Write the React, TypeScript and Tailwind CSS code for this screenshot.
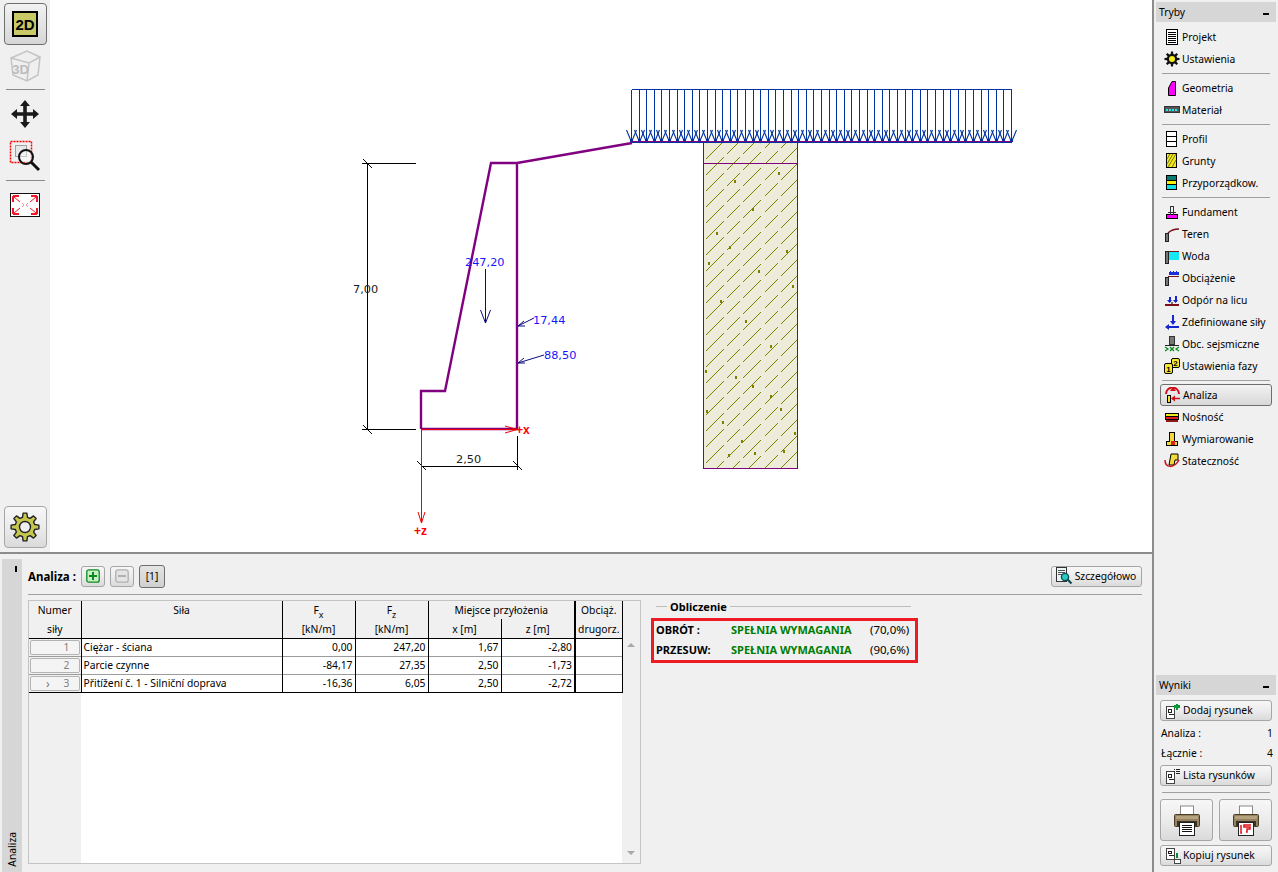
import React from "react";

const FONT = "font-['Noto_Sans','DejaVu_Sans',sans-serif]";
const BTN = "border border-[#a6a6a6] rounded-[3px] bg-linear-to-b from-[#f7f7f7] via-[#ececec] to-[#dadada]";

function Ico({ children, size = 16 }: { children: React.ReactNode; size?: number }) {
  return (
    <svg width={size} height={size} viewBox="0 0 16 16" className="shrink-0" shapeRendering="crispEdges">
      {children}
    </svg>
  );
}

function gearPath(cx: number, cy: number, ro: number, ri: number, teeth: number) {
  let d = "";
  const step = (Math.PI * 2) / teeth;
  for (let i = 0; i < teeth; i++) {
    const a = i * step - Math.PI / 2;
    const pts = [
      [ri, a - step * 0.32],
      [ro, a - step * 0.17],
      [ro, a + step * 0.17],
      [ri, a + step * 0.32],
    ];
    pts.forEach(([r, t], j) => {
      d += `${i === 0 && j === 0 ? "M" : "L"}${(cx + r * Math.cos(t)).toFixed(2)} ${(cy + r * Math.sin(t)).toFixed(2)} `;
    });
  }
  return d + "Z";
}

const Post = () => <rect x="1.500" y="7.500" width="3" height="8" fill="#777" stroke="#222" strokeWidth="1" />;

const icons: Record<string, React.ReactNode> = {
  projekt: (
    <Ico>
      <rect x="2.500" y="0.500" width="11" height="15" fill="#fff" stroke="#000" />
      <path d="M4 3.500h8M4 5.500h8M4 7.500h8M4 9.500h8M4 11.500h8M4 13.500h8" stroke="#000" />
    </Ico>
  ),
  ustawienia: (
    <svg width="16" height="16" viewBox="0 0 16 16">
      <path d={gearPath(8, 8, 7.6, 5.2, 8)} fill="#111" />
      <circle cx="8" cy="8" r="3" fill="#f6ee1c" />
    </svg>
  ),
  geometria: (
    <Ico>
      <path d="M4.500 15.500V8L8 1.500h3.500v14z" fill="#f0f" stroke="#000" shapeRendering="auto" />
    </Ico>
  ),
  material: (
    <Ico>
      <rect x="0.500" y="4.500" width="15" height="6" fill="#555" stroke="#333" />
      <path d="M2 7.500h12" stroke="#1fe6f0" strokeWidth="2" strokeDasharray="2 1" />
    </Ico>
  ),
  profil: (
    <Ico>
      <rect x="2.500" y="0.500" width="10" height="15" fill="#fff" stroke="#000" />
      <path d="M3 5.500h9M3 10.500h9" stroke="#000" />
    </Ico>
  ),
  grunty: (
    <Ico>
      <rect x="2.500" y="0.500" width="10" height="14" fill="#f2e820" stroke="#000" />
      <path d="M3 6l3-5M3 11l6-10M4 14l8-13M8 14l4-7" stroke="#7a7a10" strokeWidth="1" shapeRendering="auto" />
    </Ico>
  ),
  przypisz: (
    <Ico>
      <rect x="2.500" y="0.500" width="10" height="14" fill="#fff" stroke="#000" />
      <rect x="3" y="1" width="9" height="4" fill="#0d7a70" />
      <rect x="3" y="5" width="9" height="5" fill="#f7f000" />
      <rect x="3" y="10" width="9" height="4" fill="#10e0e6" />
      <path d="M3 5.500h9M3 9.500h9" stroke="#000" />
    </Ico>
  ),
  fundament: (
    <Ico>
      <rect x="2.500" y="10.500" width="11" height="4" fill="#f0f" stroke="#000" />
      <path d="M6.500 2v8.500M9.500 2v8.500M6 2.500h4M4 8.500h8" stroke="#333" fill="none" />
    </Ico>
  ),
  teren: (
    <Ico>
      <Post />
      <path d="M4 7C7 4 11 3 15 3" stroke="#7a1018" strokeWidth="1.600" fill="none" shapeRendering="auto" />
    </Ico>
  ),
  woda: (
    <Ico>
      <rect x="4" y="4" width="11" height="8" fill="#15e8f5" />
      <path d="M1 3.500h14" stroke="#7a1018" strokeWidth="1" />
      <rect x="1.500" y="3.500" width="3" height="12" fill="#777" stroke="#222" />
    </Ico>
  ),
  obciazenie: (
    <Ico>
      <Post />
      <path d="M4 6.500h11" stroke="#7a1018" />
      <path d="M5 2h10v3H5z" fill="#1a2fd8" />
      <path d="M6.500 2v-1M9.500 2v-1M12.500 2v-1" stroke="#1a2fd8" />
    </Ico>
  ),
  odpor: (
    <Ico>
      <path d="M1 12.500h14" stroke="#7a1018" strokeWidth="2" />
      <path d="M5.500 5v5M11.500 4v6" stroke="#1525d0" strokeWidth="2" />
      <path d="M3 8l2.500 3L8 8zM9 8l2.500 3L14 8z" fill="#1525d0" shapeRendering="auto" />
      <rect x="7" y="10" width="2" height="2" fill="#777" />
    </Ico>
  ),
  zdef: (
    <Ico>
      <path d="M9 1v9M3 13h12" stroke="#1525d0" strokeWidth="2" />
      <path d="M6 7l3 4 3-4zM5 10l-4 3 4 3z" fill="#1525d0" shapeRendering="auto" />
    </Ico>
  ),
  sejs: (
    <Ico>
      <rect x="5.500" y="0.500" width="5" height="8" fill="#777" stroke="#333" />
      <path d="M1 9.500h14" stroke="#222" />
      <path d="M1 11l3 2-3 2M6 11l2 2 2-2M6 15l2-2 2 2M15 11l-3 2 3 2" stroke="#0a8a20" fill="none" strokeWidth="1.300" shapeRendering="auto" />
    </Ico>
  ),
  faza: (
    <svg width="16" height="16" viewBox="0 0 16 16">
      <rect x="7.500" y="0.500" width="8" height="9" rx="1.500" fill="#f3e733" stroke="#000" />
      <rect x="0.500" y="5.500" width="8" height="10" rx="1.500" fill="#f3e733" stroke="#000" />
      <text x="11.500" y="7.800" textAnchor="middle" fontSize="8" fontWeight="700" fontFamily="Liberation Sans">2</text>
      <text x="4.500" y="13.800" textAnchor="middle" fontSize="8" fontWeight="700" fontFamily="Liberation Sans">1</text>
    </svg>
  ),
  analiza: (
    <svg width="16" height="16" viewBox="0 0 16 16">
      <path d="M1 7A6 6 0 0 1 14 7" stroke="#d0101a" strokeWidth="2" fill="none" />
      <path d="M5 4l3-4 3 4z" fill="#d0101a" />
      <rect x="2.500" y="8.500" width="3" height="7" fill="#f5e12c" stroke="#000" />
      <path d="M7 11.500h8" stroke="#d0101a" strokeWidth="1.500" />
      <path d="M10 8.500l-4 3 4 3z" fill="#d0101a" />
    </svg>
  ),
  nosnosc: (
    <Ico>
      <rect x="1.500" y="4.500" width="13" height="3" fill="#f2e820" stroke="#000" />
      <rect x="1.500" y="7.500" width="13" height="3" fill="#e02020" stroke="#000" />
      <path d="M2 11h12v2H2z" fill="#8a1a1a" />
    </Ico>
  ),
  wymiar: (
    <Ico>
      <path d="M5.500 1.500h5v9h3v4h-11v-4h3z" fill="#f4d93a" stroke="#000" />
      <rect x="7" y="10" width="4" height="4" fill="#e02020" />
    </Ico>
  ),
  statecz: (
    <svg width="16" height="16" viewBox="0 0 16 16">
      <path d="M7 1h7v6h-3l-1 5H5z" fill="#f4d93a" stroke="#000" />
      <path d="M1 7C1 15 10 16 15 7" stroke="#d0101a" strokeWidth="1.500" fill="none" />
    </svg>
  ),
  dodaj: (
    <Ico>
      <rect x="1.500" y="3.500" width="8" height="11.500" fill="#fff" stroke="#444" />
      <path d="M3.500 6.500h3v3h-3zM3.500 11.500h5" stroke="#222" fill="none" />
      <path d="M9 3.500h6M12 0.500v6" stroke="#0a9a30" strokeWidth="2.500" />
    </Ico>
  ),
  lista: (
    <Ico>
      <rect x="1.500" y="3.500" width="8" height="11.500" fill="#fff" stroke="#444" />
      <path d="M3.500 6.500h3v3h-3zM3.500 11.500h5" stroke="#222" fill="none" />
      <path d="M9 1.500h1M11 1.500h4M9 3.500h1M11 3.500h4M9 5.500h1M11 5.500h4" stroke="#222" />
    </Ico>
  ),
  kopiuj: (
    <Ico>
      <rect x="1.500" y="0.500" width="8" height="10.500" fill="#fff" stroke="#444" />
      <path d="M3.500 3.500h3v2h-3zM3.500 7.500h5" stroke="#222" fill="none" />
      <path d="M12 5v5" stroke="#0a8a30" strokeWidth="1.500" />
      <rect x="9.500" y="11.500" width="6" height="4" fill="#fff" stroke="#444" />
    </Ico>
  ),
  szczegoly: (
    <svg width="18" height="18" viewBox="0 0 18 18">
      <rect x="1.500" y="0.500" width="10" height="14" fill="#eaf6f6" stroke="#333" />
      <path d="M3 3.500h7M3 5.500h7M3 7.500h4" stroke="#555" />
      <circle cx="10" cy="10" r="3.600" fill="#28c8c0" stroke="#0a4a50" strokeWidth="1.300" />
      <path d="M12.500 12.500l4 4" stroke="#0a4a50" strokeWidth="2.200" />
    </svg>
  ),
};

function Printer({ red }: { red?: boolean }) {
  return (
    <svg width="26" height="31" viewBox="0 0 26 31">
      <rect x="6.500" y="1" width="13" height="9" fill="#fff" stroke="#888" />
      <rect x="0.500" y="9.500" width="25" height="12" rx="1" fill="#97825f" stroke="#4a3e28" />
      <rect x="2" y="11" width="22" height="3" fill="#b5a27e" />
      <rect x="3" y="16" width="20" height="5" fill="#3a3428" />
      <rect x="5.500" y="17.500" width="15" height="13" fill="#fff" stroke="#222" />
      {red ? (
        <path d="M8 20v8h1M18 20h-7v2h6v2h-3v3h-1" stroke="#e01018" strokeWidth="1.500" fill="none" />
      ) : (
        <path d="M8 20.500h10M8 22.500h10M8 24.500h10M8 26.500h10" stroke="#111" />
      )}
    </svg>
  );
}

type Item = { label: string; icon: string; active?: boolean };
const groups: Item[][] = [
  [
    { label: "Projekt", icon: "projekt" },
    { label: "Ustawienia", icon: "ustawienia" },
  ],
  [
    { label: "Geometria", icon: "geometria" },
    { label: "Materiał", icon: "material" },
  ],
  [
    { label: "Profil", icon: "profil" },
    { label: "Grunty", icon: "grunty" },
    { label: "Przyporządkow.", icon: "przypisz" },
  ],
  [
    { label: "Fundament", icon: "fundament" },
    { label: "Teren", icon: "teren" },
    { label: "Woda", icon: "woda" },
    { label: "Obciążenie", icon: "obciazenie" },
    { label: "Odpór na licu", icon: "odpor" },
    { label: "Zdefiniowane siły", icon: "zdef" },
    { label: "Obc. sejsmiczne", icon: "sejs" },
    { label: "Ustawienia fazy", icon: "faza" },
  ],
  [
    { label: "Analiza", icon: "analiza", active: true },
    { label: "Nośność", icon: "nosnosc" },
    { label: "Wymiarowanie", icon: "wymiar" },
    { label: "Stateczność", icon: "statecz" },
  ],
];

function PanelHeader({ title }: { title: string }) {
  return (
    <div className="h-5 mx-[2px] bg-[#d6d6d6] flex items-center justify-between pl-[3px] pr-[7px]">
      <span>{title}</span>
      <span className="w-[6px] h-[2px] bg-black mt-1" />
    </div>
  );
}

function SideButton({ icon, label }: { icon: string; label: string }) {
  return (
    <button className={`h-[21px] w-[112px] ml-[6px] flex items-center gap-[2px] pl-[4px] ${BTN}`}>
      {icons[icon]}
      <span>{label}</span>
    </button>
  );
}

function Sidebar() {
  return (
    <aside className="w-[126px] shrink-0 h-full border-l-2 border-[#8c8c8c] bg-[#f0f0f0] flex flex-col justify-between pt-[2px] pb-[6px]">
      <div>
        <PanelHeader title="Tryby" />
        <div className="mt-[4px]">
          {groups.map((g, i) => (
            <div key={i}>
              {i > 0 && <div className="h-px bg-[#a0a0a0] mx-[8px] my-[3px]" />}
              {g.map((it) => (
                <div
                  key={it.label}
                  className={`h-[22px] ml-[6px] w-[112px] flex items-center gap-[2px] pl-[4px] ${
                    it.active ? "border border-[#6e6e6e] rounded-[3px] bg-linear-to-b from-[#f2f2f2] to-[#d8d8d8]" : ""
                  }`}
                >
                  {icons[it.icon]}
                  <span>{it.label}</span>
                </div>
              ))}
            </div>
          ))}
        </div>
      </div>

      <div>
        <PanelHeader title="Wyniki" />
        <div className="mt-[5px]">
          <SideButton icon="dodaj" label="Dodaj rysunek" />
        </div>
        <div className="flex justify-between h-5 items-center ml-[7px] mr-[5px] mt-[2px]">
          <span>Analiza :</span>
          <span>1</span>
        </div>
        <div className="flex justify-between h-5 items-center ml-[7px] mr-[5px] mb-[2px]">
          <span>Łącznie :</span>
          <span>4</span>
        </div>
        <SideButton icon="lista" label="Lista rysunków" />
        <div className="h-px bg-[#a0a0a0] mx-[8px] mt-[6px] mb-[6px]" />
        <div className="flex gap-[6px] ml-[6px]">
          <button className={`w-[53px] h-[42px] flex items-center justify-center ${BTN}`}>
            <Printer />
          </button>
          <button className={`w-[53px] h-[42px] flex items-center justify-center ${BTN}`}>
            <Printer red />
          </button>
        </div>
        <div className="mt-[4px]">
          <SideButton icon="kopiuj" label="Kopiuj rysunek" />
        </div>
      </div>
    </aside>
  );
}

function Toolbar() {
  return (
    <div className="w-[50px] shrink-0 bg-[#f0f0f0] flex flex-col items-center pt-[3px] pb-[4px]">
      <button className="w-[43px] h-[42px] rounded-[4px] border border-[#6e6e6e] bg-linear-to-b from-[#f2f2f2] to-[#d6d6d6] flex items-center justify-center">
        <span className="w-[26px] h-[26px] bg-[#c9c968] border-2 border-black flex items-center justify-center font-['Liberation_Sans'] font-bold text-[15px] leading-none text-black">
          2D
        </span>
      </button>
      <svg width="32" height="32" viewBox="0 0 32 32" className="mt-[5px]">
        <path d="M2 8L18 1l13 6-2 18-11 6-14-6z" fill="#efefef" stroke="#c4c4c4" strokeWidth="1.500" />
        <path d="M2 8l18 5 11-6M20 13l-2 18" fill="none" stroke="#c4c4c4" strokeWidth="1.500" />
        <text x="11.500" y="24" textAnchor="middle" fontSize="13" fontWeight="700" fill="#bcbcbc" fontFamily="Liberation Sans">3D</text>
      </svg>
      <div className="w-[39px] h-px bg-[#8a8a8a] mt-[7px]" />
      <svg width="30" height="30" viewBox="0 0 30 30" className="mt-[9px]">
        <path d="M15 1l5 6h-3.200v6.200H23V10l6 5-6 5v-3.200h-6.200V23H20l-5 6-5-6h3.200v-6.200H7V20l-6-5 6-5v3.200h6.200V7H10z" fill="#1a1a1a" />
      </svg>
      <svg width="32" height="36" viewBox="0 0 32 36" className="mt-[10px]">
        <rect x="1.500" y="2.500" width="21" height="21" fill="none" stroke="#f80000" strokeWidth="1.500" strokeDasharray="2 1" />
        <rect x="6.500" y="6.500" width="11" height="11" fill="#e8e8e8" stroke="#a0a0a0" />
        <circle cx="17" cy="18" r="7" fill="#fff" fillOpacity="0.4" stroke="#111" strokeWidth="2" />
        <path d="M22 23l8 8" stroke="#111" strokeWidth="3" />
      </svg>
      <div className="w-[39px] h-px bg-[#8a8a8a] mt-[5px]" />
      <svg width="30" height="24" viewBox="0 0 30 24" className="mt-[12px]">
        <rect x="0.500" y="0.500" width="29" height="23" fill="#fff" stroke="#111" />
        <path d="M3 3h6M3 3v6M27 3h-6M27 3v6M3 21h6M3 21v-6M27 21h-6M27 21v-6" stroke="#f01828" strokeWidth="2" fill="none" />
        <path d="M4 4l6 5M26 4l-6 5M4 20l6-5M26 20l-6-5" stroke="#f01828" />
        <path d="M12 10l2 2-2 2M18 10l-2 2 2 2" stroke="#f59aa0" fill="none" />
      </svg>
      <button className={`mt-auto w-[43px] h-[42px] flex items-center justify-center rounded-[4px] ${BTN}`}>
        <svg width="30" height="30" viewBox="0 0 30 30">
          <path d={gearPath(15, 15, 14, 10, 8)} fill="#c6c64e" stroke="#222" strokeWidth="1.400" strokeLinejoin="round" />
          <circle cx="15" cy="15" r="5.500" fill="#efefef" stroke="#222" strokeWidth="1.400" />
        </svg>
      </button>
    </div>
  );
}

// deterministic specks in the soil hatch
const specks = [
  [716, 232], [734, 180], [752, 208], [778, 172], [708, 262], [729, 246], [758, 270], [786, 250],
  [720, 300], [745, 320], [770, 345], [792, 285], [705, 370], [735, 376], [752, 385], [770, 395],
  [722, 421], [741, 440], [754, 452], [783, 450], [794, 432], [780, 408], [706, 410], [728, 454],
];

function Drawing() {
  const loads = Array.from({ length: 51 }, (_, i) => 631.5 + Math.round(i * 7.6));
  const hatch = Array.from({ length: 36 }, (_, i) => 145 + i * 16);
  const purple = "#800080";
  const load = "#0033a0";
  const blue = "#0a0a80";
  return (
    <svg viewBox="50 0 1102 552" className="block w-[1102px] h-[552px]" shapeRendering="crispEdges">
      <defs>
        <clipPath id="soil">
          <rect x="704" y="142" width="93" height="326" />
        </clipPath>
      </defs>

      <rect x="703.500" y="142" width="94" height="326" fill="#ececd9" />
      <g clipPath="url(#soil)" stroke="#808000" strokeDasharray="18 4 26 5">
        {hatch.map((y) => (
          <line key={y} x1="690" y1={y + 14} x2="810" y2={y - 106} />
        ))}
      </g>
      <g fill="#808000">
        {specks.map(([x, y]) => (
          <rect key={`${x}-${y}`} x={x} y={y} width="2" height="3" />
        ))}
      </g>
      <rect x="703.500" y="142.500" width="94" height="326" fill="none" stroke={purple} />
      <path d="M704 163.500h93" stroke={purple} />

      <path d={`M631.500 89.500H${loads[50]}`} stroke={load} fill="none" />
      {loads.map((x) => (
        <g key={x} stroke={load} fill="none">
          <path d={`M${x} 90V142`} />
          <path d={`M${x - 5} 130L${x} 142L${x + 5} 130`} shapeRendering="auto" strokeWidth="1.100" />
          <rect x={x - 1.5} y="139" width="3" height="3" fill={load} stroke="none" />
        </g>
      ))}
      <path d="M632 141.500H1012" stroke={purple} strokeWidth="1" />
      <path d="M632 142.500H1012" stroke={load} strokeWidth="1" />

      <g stroke="#000" fill="none">
        <path d="M362 163.500H416M362 429.500H416M367.500 163V430" />
        <path d="M363 159l9 9M363 425l9 9M417 461l9 9M513 461l9 9" />
        <path d="M517.500 436V470M421.500 466.500H517.500" />
      </g>

      <path
        d="M421 429V391H445L491 163H517V429H421M517 163L632 143"
        fill="none"
        stroke={purple}
        strokeWidth="2.400"
        shapeRendering="auto"
      />

      <path d="M421 429.500H517" stroke="#f00000" />
      <path d="M421.500 429V522" stroke="#f00000" />
      <g stroke="#f00000" fill="none" shapeRendering="auto">
        <path d="M505 426l12 3.500l-12 3.500M418 512l3.500 11l3.500-11" />
      </g>

      <g stroke={blue} fill="none" shapeRendering="auto">
        <path d="M485.500 269V323M480.500 310l5 13l5-13" />
        <path d="M534 318L518 326M524 321l-6 5l7 0" />
        <path d="M544 355L518 363M524 358l-6 5l7 0" />
      </g>

      <g fontFamily="DejaVu Sans, sans-serif" fontSize="11.300">
        <text x="353" y="293" fill="#202020">7,00</text>
        <text x="456" y="463" fill="#202020">2,50</text>
        <text x="465" y="266" fill="#1515ff">247,20</text>
        <text x="533" y="324" fill="#1515ff">17,44</text>
        <text x="544" y="359" fill="#1515ff">88,50</text>
        <text x="516" y="434" fill="#ff0000" fontSize="12" fontWeight="700" fontFamily="Liberation Sans">+x</text>
        <text x="414" y="535" fill="#ff0000" fontSize="12" fontWeight="700" fontFamily="Liberation Sans">+z</text>
      </g>
    </svg>
  );
}

type Row = { n: number; name: string; fx: string; fz: string; x: string; z: string; mark?: boolean };
const rows: Row[] = [
  { n: 1, name: "Ciężar - ściana", fx: "0,00", fz: "247,20", x: "1,67", z: "-2,80" },
  { n: 2, name: "Parcie czynne", fx: "-84,17", fz: "27,35", x: "2,50", z: "-1,73" },
  { n: 3, name: "Přitížení č. 1 - Silniční doprava", fx: "-16,36", fz: "6,05", x: "2,50", z: "-2,72", mark: true },
];

function ForceTable() {
  const th = "font-normal border-r border-black align-top p-0 leading-[17px] text-center";
  const th2 = `${th} pt-[2px]`;
  const td = "border-r border-black text-right pr-[2px] p-0 leading-[17px]";
  return (
    <div className="w-[613px] h-[264px] shrink-0 border border-[#c4c4c4] bg-[#f0f0f0] flex">
      <table className="table-fixed border-collapse w-[593px] h-[262px]">
        <colgroup>
          <col className="w-[52px]" />
          <col className="w-[201px]" />
          <col className="w-[73px]" />
          <col className="w-[73px]" />
          <col className="w-[73px]" />
          <col className="w-[74px]" />
          <col className="w-[47px]" />
        </colgroup>
        <thead>
          <tr className="h-[18px]">
            <th className={`${th} pt-[1px]`}>Numer</th>
            <th rowSpan={2} className={`${th} pt-[1px]`}>Siła</th>
            <th className={`${th} pt-[1px]`}>
              F<sub className="text-[9px] align-[-2px] leading-none">x</sub>
            </th>
            <th className={`${th} pt-[1px]`}>
              F<sub className="text-[9px] align-[-2px] leading-none">z</sub>
            </th>
            <th colSpan={2} className={`${th} pt-[1px] border-r-2`}>Miejsce przyłożenia</th>
            <th className={`${th} pt-[1px]`}>Obciąż.</th>
          </tr>
          <tr className="h-[19px] border-b border-black">
            <th className={th2}>siły</th>
            <th className={th2}>[kN/m]</th>
            <th className={th2}>[kN/m]</th>
            <th className={th2}>x [m]</th>
            <th className={`${th2} border-r-2`}>z [m]</th>
            <th className={th2}>drugorz.</th>
          </tr>
        </thead>
        <tbody>
          {rows.map((r, i) => (
            <tr key={r.n} className={`h-[18px] border-b ${i === rows.length - 1 ? "border-black" : "border-[#9c9c9c]"}`}>
              <td className="border-r border-black bg-[#f0f0f0] p-0">
                <div className="mx-[1px] h-[15px] border border-[#b4b4b4] rounded-[2px] bg-[#f4f4f4] flex items-center justify-end pr-[9px] text-[#808080] gap-[14px]">
                  {r.mark && <span className="text-[#777] text-[12px] leading-none">›</span>}
                  <span>{r.n}</span>
                </div>
              </td>
              <td className="border-r border-black bg-white p-0 pl-[2px] leading-[17px]">{r.name}</td>
              <td className={`${td} bg-white`}>{r.fx}</td>
              <td className={`${td} bg-white`}>{r.fz}</td>
              <td className={`${td} bg-white`}>{r.x}</td>
              <td className={`${td} bg-white border-r-2`}>{r.z}</td>
              <td className="border-r border-black bg-white p-0" />
            </tr>
          ))}
          <tr>
            <td className="bg-[#f0f0f0] p-0" />
            <td colSpan={6} className="bg-white p-0" />
          </tr>
        </tbody>
      </table>
      <div className="flex-1 flex flex-col items-center justify-between pt-[42px] pb-[8px]">
        <span className="w-0 h-0 border-x-[4px] border-x-transparent border-b-[4px] border-b-[#a8a8a8]" />
        <span className="w-0 h-0 border-x-[4px] border-x-transparent border-t-[4px] border-t-[#a8a8a8]" />
      </div>
    </div>
  );
}

function Results() {
  const results = [
    { label: "OBRÓT :", pct: "(70,0%)" },
    { label: "PRZESUW:", pct: "(90,6%)" },
  ];
  return (
    <div className="w-[267px] ml-[10px] shrink-0 text-[11px]">
      <div className="flex items-center h-[14px] pl-[5px] mt-[-1px]">
        <span className="w-[11px] h-px bg-[#bdbdbd]" />
        <span className="font-bold mx-[3px] leading-none">Obliczenie</span>
        <span className="w-[181px] h-px bg-[#bdbdbd]" />
      </div>
      <div className="mt-[5px] w-[267px] h-[45px] border-[3px] border-[#ed1c24] pl-[2px] pb-[2px] flex flex-col justify-center gap-[3px]">
        {results.map((r) => (
          <div key={r.label} className="flex h-[17px] items-center">
            <span className="w-[75px] font-bold">{r.label}</span>
            <span className="w-[139px] font-bold text-[#007d00]">SPEŁNIA WYMAGANIA</span>
            <span className="text-[11.500px]">{r.pct}</span>
          </div>
        ))}
      </div>
    </div>
  );
}

function BottomPanel() {
  return (
    <div className="flex-1 border-t-2 border-[#8c8c8c] bg-[#f0f0f0] flex pt-[5px] pl-[2px]">
      <div className="relative w-[20px] shrink-0 bg-[#d6d6d6] flex flex-col items-center justify-end pb-[5px]">
        <span className="absolute top-[7px] left-[13px] w-[2px] h-[6px] bg-black" />
        <span className="[writing-mode:vertical-rl] rotate-180">Analiza</span>
      </div>
      <div className="ml-[6px] w-[1114px]">
        <div className="mt-[6px] h-[30px] flex items-center border-b border-[#a0a0a0] pb-[7px]">
          <span className="font-bold text-[11.500px] w-[53px] pt-[2px]">Analiza :</span>
          <button className={`w-[24px] h-[21px] flex items-center justify-center ${BTN}`}>
            <svg width="14" height="14" viewBox="0 0 14 14">
              <rect x="0.800" y="0.800" width="12.400" height="12.400" rx="2" fill="#c8f0c8" stroke="#0a8a20" strokeWidth="1.300" />
              <path d="M7 3v8M3 7h8" stroke="#0a8a20" strokeWidth="2" />
            </svg>
          </button>
          <button className={`ml-[5px] w-[24px] h-[21px] flex items-center justify-center ${BTN}`}>
            <svg width="14" height="14" viewBox="0 0 14 14">
              <rect x="0.800" y="0.800" width="12.400" height="12.400" rx="2" fill="#e4e4e4" stroke="#b0b0b0" strokeWidth="1.300" />
              <path d="M3 7h8" stroke="#b0b0b0" strokeWidth="2" />
            </svg>
          </button>
          <button className="ml-[5px] w-[26px] h-[23px] border border-[#6e6e6e] rounded-[3px] bg-linear-to-b from-[#e4e4e4] to-[#d0d0d0]">
            [1]
          </button>
          <button className={`ml-auto w-[91px] h-[21px] flex items-center justify-center gap-[2px] pr-[2px] ${BTN}`}>
            {icons.szczegoly}
            <span>Szczegółowo</span>
          </button>
        </div>
        <div className="flex mt-[5px]">
          <ForceTable />
          <Results />
        </div>
      </div>
    </div>
  );
}

export default function App() {
  return (
    <div className={`w-[1278px] h-[872px] overflow-hidden flex bg-white text-black text-[10.300px] leading-none ${FONT}`}>
      <div className="flex-1 flex flex-col min-w-0">
        <div className="h-[552px] flex shrink-0">
          <Toolbar />
          <Drawing />
        </div>
        <BottomPanel />
      </div>
      <Sidebar />
    </div>
  );
}
